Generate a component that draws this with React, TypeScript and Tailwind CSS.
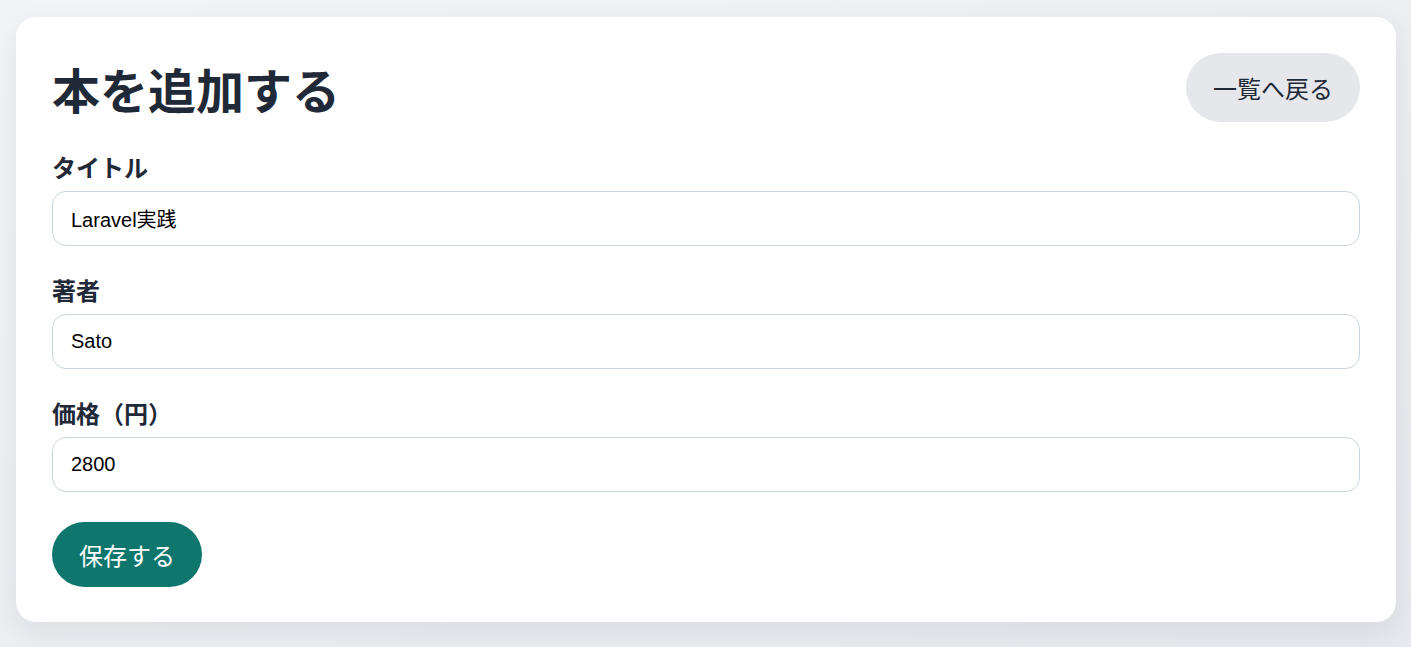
import React from "react";

const jp = "font-['Noto_Sans_CJK_JP','Noto_Sans',sans-serif]";

function Field({ label, value }: { label: string; value: string }) {
  return (
    <div className="flex flex-col">
      <label className={`${jp} text-[24px] font-bold leading-[30px] text-[#1f2937] mb-[9px]`}>{label}</label>
      <input
        readOnly
        value={value}
        className="h-[55px] w-full rounded-[14px] border border-[#cbd5e1] bg-white px-[18px] text-[20px] text-black outline-none font-['Liberation_Sans','Noto_Sans_CJK_JP',sans-serif]"
      />
    </div>
  );
}

export default function App() {
  return (
    <div className="min-h-screen bg-gradient-to-br from-[#f3f4f7] to-[#e7e9ee] pl-4 pr-[15px] pt-[17px] pb-[25px]">
      <div className="rounded-[20px] bg-white px-9 pt-9 pb-[35px] shadow-[0_10px_30px_rgba(15,23,42,0.08)]">
        <div className="mb-[30px] flex items-center justify-between">
          <h1 className={`${jp} text-[48px] font-bold leading-none text-[#1f2937]`}>本を追加する</h1>
          <button className={`${jp} h-[69px] rounded-full bg-[#e5e7eb] px-[27px] text-[24px] text-[#1f2937]`}>一覧へ戻る</button>
        </div>
        <div className="flex flex-col gap-[29px]">
          <Field label="タイトル" value="Laravel実践" />
          <Field label="著者" value="Sato" />
          <Field label="価格（円）" value="2800" />
        </div>
        <button className={`${jp} mt-[30px] h-[65px] rounded-full bg-[#0f766e] px-[27px] text-[24px] text-white`}>保存する</button>
      </div>
    </div>
  );
}
